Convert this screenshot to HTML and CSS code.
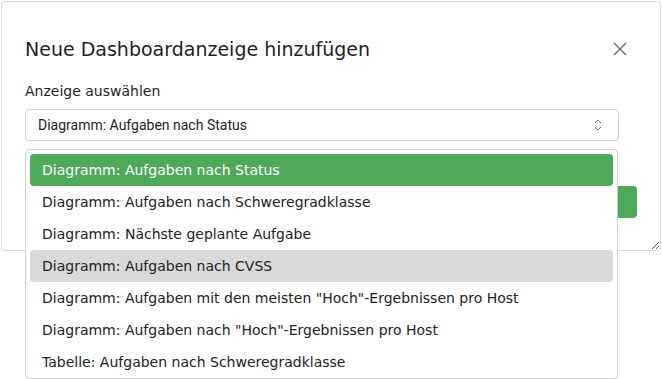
FILE: index.html
```html
<!DOCTYPE html>
<html lang="de">
<head>
    <meta charset="UTF-8">
    <title>Neue Dashboardanzeige hinzufügen</title>
    <link rel="stylesheet" href="styles.css">
</head>
<body>
    <div class="page">
        <div class="modal">
            <header class="modal-header">
                <h1>Neue Dashboardanzeige hinzufügen</h1>
                <button class="close" aria-label="Schließen">
                    <svg width="14" height="14" viewBox="0 0 14 14">
                        <path d="M1 1 L13 13 M13 1 L1 13" stroke="#666" stroke-width="1.4" fill="none"/>
                    </svg>
                </button>
            </header>

            <label class="field-label">Anzeige auswählen</label>
            <div class="select">
                <span>Diagramm: Aufgaben nach Status</span>
                <svg class="chevron" width="8" height="12" viewBox="0 0 8 12">
                    <path d="M1 4 L4 1 L7 4 M1 8 L4 11 L7 8" stroke="#777" stroke-width="1" fill="none"/>
                </svg>
            </div>

            <div class="modal-footer">
                <button class="btn-add">Hinzufügen</button>
            </div>
        </div>

        <ul class="dropdown">
            <li class="item selected">Diagramm: Aufgaben nach Status</li>
            <li class="item">Diagramm: Aufgaben nach Schweregradklasse</li>
            <li class="item">Diagramm: Nächste geplante Aufgabe</li>
            <li class="item hover">Diagramm: Aufgaben nach CVSS</li>
            <li class="item">Diagramm: Aufgaben mit den meisten "Hoch"-Ergebnissen pro Host</li>
            <li class="item">Diagramm: Aufgaben nach "Hoch"-Ergebnissen pro Host</li>
            <li class="item">Tabelle: Aufgaben nach Schweregradklasse</li>
        </ul>
    </div>
</body>
</html>
```

FILE: styles.css
```css
:root {
    --border: #dcdcdc;
    --text: #1f1f1f;
    --green: #4fa95b;
    --hover: #d9d9d9;
}

* {
    margin: 0;
    padding: 0;
    box-sizing: border-box;
}

body {
    font-family: 'DejaVu Sans', sans-serif;
    color: var(--text);
    background: #fff;
    overflow: hidden;
}

.page {
    position: relative;
    padding: 1px;
    height: 379px;
}

.modal {
    width: 660px;
    height: 250px;
    border: 1px solid var(--border);
    border-radius: 4px;
    padding: 0 23px;
    resize: both;
    overflow: auto;
}

.modal-header {
    display: flex;
    align-items: center;
    justify-content: space-between;
    height: 94px;
}

.modal-header h1 {
    font-size: 19px;
    font-weight: 400;
}

.close {
    border: none;
    background: none;
    width: 14px;
    height: 14px;
    margin-right: 10px;
    display: flex;
}

.field-label {
    display: block;
    font-size: 14px;
    line-height: 16px;
    margin-top: -13px;
}

.select {
    margin-top: 10px;
    height: 32px;
    width: 594px;
    border: 1px solid #cfcfcf;
    border-radius: 4px;
    display: flex;
    align-items: center;
    justify-content: space-between;
    padding: 0 16px 0 12px;
    font-family: Roboto, sans-serif;
    font-size: 14px;
}

.modal-footer {
    display: flex;
    justify-content: flex-end;
    margin-top: 45px;
}

.btn-add {
    background: var(--green);
    color: #fff;
    border: none;
    border-radius: 4px;
    height: 32px;
    padding: 0 20px;
    font-size: 13px;
}

.dropdown {
    position: absolute;
    top: 149px;
    left: 25px;
    width: 593px;
    height: 230px;
    overflow: hidden;
    border: 1px solid #cfcfcf;
    border-radius: 4px;
    background: #fff;
    list-style: none;
    padding: 4px 4px 0;
}

.item {
    height: 32px;
    line-height: 32px;
    padding: 0 12px;
    border-radius: 4px;
    font-size: 14px;
    color: #222;
    white-space: nowrap;
}

.item.selected {
    background: var(--green);
    color: #fff;
}

.item.hover {
    background: var(--hover);
}
```
